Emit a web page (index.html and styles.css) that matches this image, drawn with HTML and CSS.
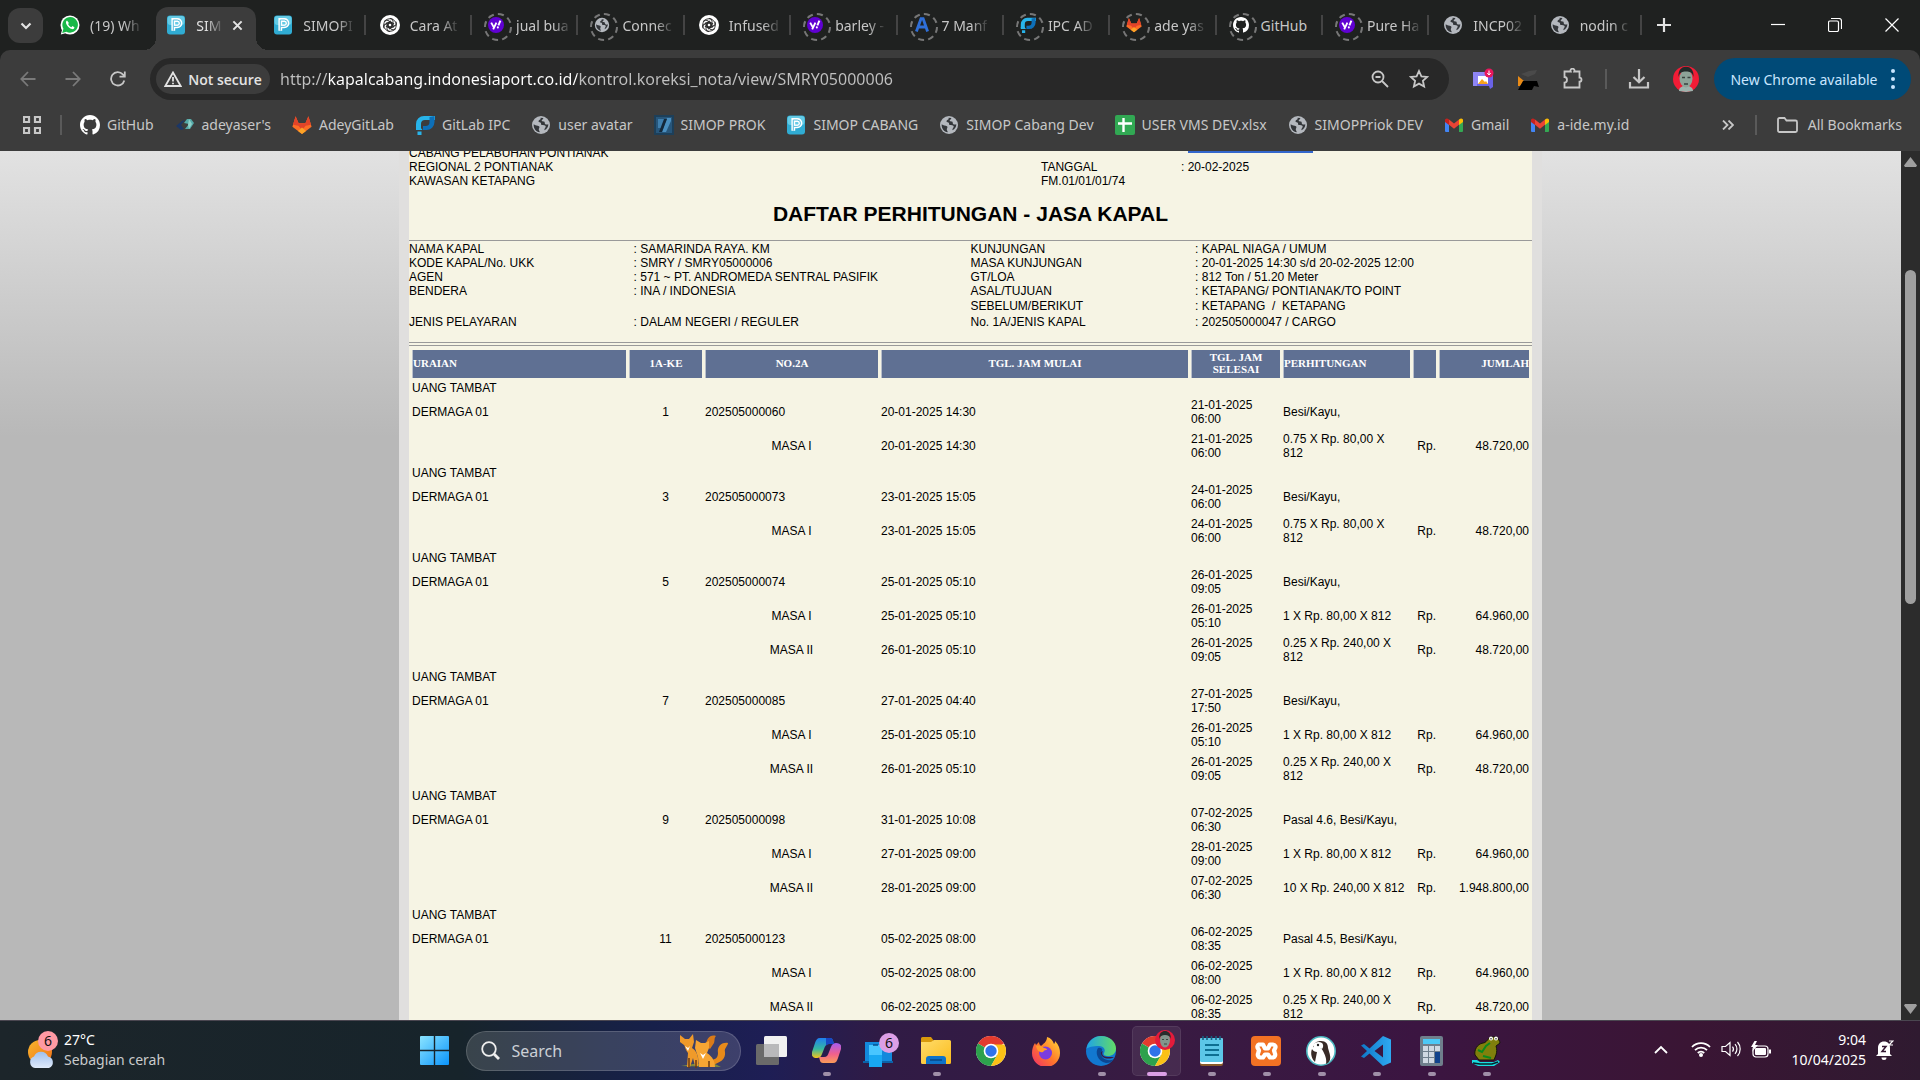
FILE: index.html
```
<!DOCTYPE html>
<html lang="id">
<head>
  <meta charset="utf-8">
  <title>SIMOP CABANG</title>
  <link rel="stylesheet" href="styles.css">
</head>
<body>
  <!-- icon sprite -->
  <svg class="sprite" aria-hidden="true">
    <defs>
      <linearGradient id="gSun" x1="0" y1="0" x2="1" y2="1"><stop offset="0" stop-color="#f8b62c"/><stop offset="1" stop-color="#f0701a"/></linearGradient>
      <linearGradient id="gCloud" x1="0" y1="0" x2="0" y2="1"><stop offset="0" stop-color="#9fc0ee"/><stop offset="1" stop-color="#dfeafb"/></linearGradient>
      <linearGradient id="gWin" x1="0" y1="0" x2="1" y2="1"><stop offset="0" stop-color="#8be4ff"/><stop offset="1" stop-color="#0a94fb"/></linearGradient>
      <linearGradient id="gCopA" x1="0" y1="0" x2="0" y2="1"><stop offset="0" stop-color="#1f7ff0"/><stop offset=".55" stop-color="#36b8a0"/><stop offset="1" stop-color="#f6c51b"/></linearGradient>
      <linearGradient id="gCopB" x1="0" y1="0" x2="0" y2="1"><stop offset="0" stop-color="#a55cf0"/><stop offset=".55" stop-color="#f0608c"/><stop offset="1" stop-color="#fb9c58"/></linearGradient>
      <linearGradient id="gFold" x1="0" y1="0" x2="1" y2="1"><stop offset="0" stop-color="#ffdc6b"/><stop offset="1" stop-color="#fbbc1c"/></linearGradient>
      <linearGradient id="gEdge" x1="0" y1="0" x2="1" y2="0"><stop offset="0" stop-color="#1fa4e6"/><stop offset="1" stop-color="#62dc66"/></linearGradient>
      <linearGradient id="gFox" x1="1" y1="0" x2="0" y2="1"><stop offset="0" stop-color="#ffe03a"/><stop offset=".5" stop-color="#ff7a2a"/><stop offset="1" stop-color="#f02a6c"/></linearGradient>
      <linearGradient id="gVs" x1="0" y1="0" x2="1" y2="0"><stop offset="0" stop-color="#0e78c8"/><stop offset="1" stop-color="#2fa9f2"/></linearGradient>
    </defs>
    <symbol id="i-whatsapp" viewBox="0 0 20 20"><circle cx="10" cy="10" r="9.500" fill="#fff"/><path d="M.8 19.400l1.400-5.200 4.300 3.800z" fill="#fff"/><path d="M2.200 17.900l1.200-4.100a7.800 7.800 0 1 1 3 2.900z" fill="#18b848"/><path d="M7 5.500c-1.400.8-1.300 2.500-.3 4.200 1.200 2.100 3.100 3.900 5.200 4.400 1.500.3 2.500-.6 2.500-1.900l-2-1.100-1 1.100c-1.500-.6-2.700-1.800-3.300-3.200l.8-1z" fill="#fff"/></symbol>
    <symbol id="i-simop" viewBox="0 0 20 20"><rect x="1" y=".5" width="18" height="19" rx="3" fill="#30acd3"/><rect x="1.500" y="1" width="17" height="9" rx="3" fill="#64cbe6"/><path d="M7.300 15.800V5h4a3.200 3.200 0 0 1 0 6.400H7.500" fill="none" stroke="#fff" stroke-width="3.800"/><path d="M7.300 15.500V5h4a3.200 3.200 0 0 1 0 6.400H7.500" fill="none" stroke="#58bfdf" stroke-width="1"/></symbol>
    <symbol id="i-gpt" viewBox="0 0 20 20"><circle cx="10" cy="10" r="10" fill="#fff"/><g fill="none" stroke="#222" stroke-width=".9"><path id="gptArm" d="M10 3.300a3 3 0 0 1 3 3v4.200l-3 1.700-3-1.700V7"/><use href="#gptArm" transform="rotate(60 10 10)"/><use href="#gptArm" transform="rotate(120 10 10)"/><use href="#gptArm" transform="rotate(180 10 10)"/><use href="#gptArm" transform="rotate(240 10 10)"/><use href="#gptArm" transform="rotate(300 10 10)"/><circle cx="10" cy="10" r="6.300"/></g></symbol>
    <symbol id="i-yahoo" viewBox="0 0 20 20"><circle cx="10" cy="10" r="10" fill="#6001d2"/><path d="M4 7l3.300 6M10.500 7L6.500 15.500" stroke="#fff" stroke-width="2.300" fill="none"/><path d="M15.500 4.500l-2.500 6" stroke="#fff" stroke-width="2.400"/><circle cx="12.300" cy="13" r="1.300" fill="#fff"/></symbol>
    <symbol id="i-globe" viewBox="0 0 20 20"><circle cx="10" cy="10" r="9" fill="#b4b8be"/><path d="M9.500 2.800c1 2-2.300 2.200-2 3.600.3 1 2 .6 2.400 1.500.4 1.200-.2 1.700 1 2.100 1.500.5 3-.2 3.700 1 .7 1.300-1.600 2.500-1.200 4.200 2.500-1.300 4-3.300 3.900-6-.9.500-2.400.7-3.200-.3-.7-.9 0-1.600-1-2.300-1-.6-2.200.1-2.400-.9-.2-1.100 1.900-1.200 1.600-2.600zM2.700 9.200c1.500 1.700 3.800.8 5.300 2 1.300 1.100-.4 2-.2 3.400.1 1 .8 1.300.9 2.700-3.600-.5-6.400-4-6-8.100z" fill="#33363a"/></symbol>
    <symbol id="i-a" viewBox="0 0 20 20"><path d="M3 18L8.800 2h2.600L17 18M5.500 12.500h9" fill="none" stroke="#2f6fd8" stroke-width="3.600"/></symbol>
    <symbol id="i-ipc" viewBox="0 0 20 20"><path d="M1 14V9a8 8 0 0 1 8-8h11v4H10a4 4 0 0 0-4 4v5z" fill="#28b4ea"/><path d="M19.500 1v6a8 8 0 0 1-8 8H8v-4h2.500a4 4 0 0 0 4-4V2z" fill="#0d6fb8"/><path d="M1 12.500h4.500l2 2.500H1zM2.500 16.500h4V20h-4z" fill="#28b4ea"/></symbol>
    <symbol id="i-gitlab" viewBox="0 0 20 20"><path d="M10 19L.4 11.800 3.600 1.200l3 7h6.800l3-7 3.200 10.600z" fill="#fc6d26"/><path d="M3.600 1.200l3 7h6.800l3-7 2.600 8.600-5.400 1L10 15l-3.600-4.200-5.400-1z" fill="#e24329"/><path d="M10 19l-4-3 4-3.400 4 3.400z" fill="#fca326"/></symbol>
    <symbol id="i-github" viewBox="0 0 16 16"><path fill="#fff" d="M8 0C3.580 0 0 3.580 0 8c0 3.540 2.290 6.530 5.470 7.590.4.070.55-.17.55-.38 0-.19-.01-.82-.01-1.490-2.010.37-2.530-.49-2.690-.94-.09-.23-.48-.94-.82-1.130-.28-.15-.68-.52-.01-.53.63-.01 1.080.58 1.230.82.72 1.210 1.870.87 2.330.66.070-.52.28-.87.510-1.070-1.780-.2-3.640-.89-3.640-3.950 0-.87.310-1.590.82-2.150-.08-.2-.36-1.020.08-2.120 0 0 .67-.21 2.200.82.640-.18 1.320-.27 2-.27s1.360.09 2 .27c1.530-1.040 2.200-.82 2.200-.82.440 1.100.160 1.920.08 2.120.510.560.82 1.270.82 2.150 0 3.070-1.870 3.750-3.650 3.950.290.250.540.730.540 1.480 0 1.070-.01 1.930-.01 2.200 0 .21.150.460.550.380A8.010 8.010 0 0 0 16 8c0-4.420-3.580-8-8-8z"/></symbol>
    <symbol id="i-ade" viewBox="0 0 20 20"><path d="M1 11l6-5 3-1-4 5 3 4-3 1z" fill="#1c3766"/><path d="M9 8l3-4h4l3 4-4 6h-5l4-5z" fill="#55a9a8"/><path d="M14 4l3 5-3 5-1-4z" fill="#8fd0c8"/></symbol>
    <symbol id="i-prok" viewBox="0 0 20 20"><rect width="20" height="20" fill="#1d3f59"/><rect x="2" y="2" width="16" height="16" fill="#27567b"/><path d="M4 4h7L8 13H4z" fill="#3f7fae"/><path d="M13 3h4v3l-5 11H8z" fill="#4a8fc0"/><path d="M10 4h3L8 17H5z" fill="#14283a"/></symbol>
    <symbol id="i-sheet" viewBox="0 0 20 20"><rect width="20" height="20" rx="2" fill="#31a853"/><path d="M8.500 3v14M3 8.500h14" stroke="#fff" stroke-width="2.400"/></symbol>
    <symbol id="i-gmail" viewBox="0 0 20 20"><path d="M1 5v11a1 1 0 0 0 1 1h3V8z" fill="#4285f4"/><path d="M19 5v11a1 1 0 0 1-1 1h-3V8z" fill="#34a853"/><path d="M15 4.500L10 8.500 5 4.500v5.300l5 4 5-4z" fill="#ea4335"/><path d="M1 5v2l4 3V4.500C3 2.500 1 3.500 1 5z" fill="#c5221f"/><path d="M19 5v2l-4 3V4.500c2-2 4-1 4 .5z" fill="#fbbc04"/></symbol>
    <symbol id="i-chrome" viewBox="0 0 30 30"><circle cx="15" cy="15" r="15" fill="#fff"/><path d="M15 15L2 7.500A15 15 0 0 1 28 7.500z" fill="#e33b2e"/><path d="M15 15L2 7.500A15 15 0 0 0 15 30l6.500-11.300z" fill="#2da14d"/><path d="M15 8.500h13.500A15 15 0 0 1 15 30l6.300-11.300z" fill="#fbc116"/><circle cx="15" cy="15" r="7.300" fill="#fff"/><circle cx="15" cy="15" r="5.700" fill="#2f73ea"/></symbol>
  </svg>

  <header class="browser">
    <div class="tab-strip">
      <button class="tab-search" aria-label="Search tabs"><svg width="12" height="8" viewBox="0 0 12 8"><path d="M1.500 1.500L6 6l4.500-4.500" class="line bold"/></svg></button>
      <nav class="tabs">
        <div class="tab no-sep"><svg class="fav"><use href="#i-whatsapp"/></svg><span class="tab-title">(19) Wh</span></div>
        <div class="tab active"><svg class="fav"><use href="#i-simop"/></svg><span class="tab-title">SIM</span><button class="tab-close" aria-label="Close tab"><svg width="11" height="11" viewBox="0 0 12 12"><path d="M1.500 1.500l9 9M10.500 1.500l-9 9" class="line bold"/></svg></button></div>
        <div class="tab"><svg class="fav"><use href="#i-simop"/></svg><span class="tab-title">SIMOPI</span></div>
        <div class="tab"><svg class="fav"><use href="#i-gpt"/></svg><span class="tab-title">Cara At</span></div>
        <div class="tab asleep"><svg class="fav"><use href="#i-yahoo"/></svg><span class="tab-title">jual bua</span></div>
        <div class="tab asleep"><svg class="fav"><use href="#i-globe"/></svg><span class="tab-title">Connec</span></div>
        <div class="tab"><svg class="fav"><use href="#i-gpt"/></svg><span class="tab-title">Infused</span></div>
        <div class="tab asleep"><svg class="fav"><use href="#i-yahoo"/></svg><span class="tab-title">barley -</span></div>
        <div class="tab asleep"><svg class="fav"><use href="#i-a"/></svg><span class="tab-title">7 Manf</span></div>
        <div class="tab asleep"><svg class="fav"><use href="#i-ipc"/></svg><span class="tab-title">IPC AD</span></div>
        <div class="tab asleep"><svg class="fav"><use href="#i-gitlab"/></svg><span class="tab-title">ade yas</span></div>
        <div class="tab asleep"><svg class="fav"><use href="#i-github"/></svg><span class="tab-title whole">GitHub</span></div>
        <div class="tab asleep"><svg class="fav"><use href="#i-yahoo"/></svg><span class="tab-title">Pure Ha</span></div>
        <div class="tab"><svg class="fav"><use href="#i-globe"/></svg><span class="tab-title">INCP02</span></div>
        <div class="tab"><svg class="fav"><use href="#i-globe"/></svg><span class="tab-title">nodin c</span></div>
      </nav>
      <div class="window-side">
        <button class="new-tab" aria-label="New tab"><svg width="14" height="14" viewBox="0 0 14 14"><path d="M7 0v14M0 7h14" class="line bold"/></svg></button>
        <div class="window-controls">
          <button aria-label="Minimize"><svg width="14" height="14" viewBox="0 0 14 14"><path d="M0 6.500h14" class="line white"/></svg></button>
          <button aria-label="Restore"><svg width="14" height="14" viewBox="0 0 14 14"><rect x=".5" y="3" width="10" height="10.500" rx="1.500" class="line white"/><path d="M3 .5h8a2.500 2.500 0 0 1 2.500 2.500v8" class="line white"/></svg></button>
          <button aria-label="Close"><svg width="14" height="14" viewBox="0 0 14 14"><path d="M.5.5l13 13M13.500.5l-13 13" class="line white"/></svg></button>
        </div>
      </div>
    </div>

    <div class="toolbar">
      <div class="nav-buttons">
        <button class="dim" aria-label="Back"><svg width="16" height="16" viewBox="0 0 16 16"><path d="M15.500 8H1.500M8 1L1.300 8 8 15" class="line mid"/></svg></button>
        <button class="dim" aria-label="Forward"><svg width="16" height="16" viewBox="0 0 16 16"><path d="M.5 8h14M8 1l6.700 7L8 15" class="line mid"/></svg></button>
        <button aria-label="Reload"><svg width="16" height="16" viewBox="0 0 16 16"><path d="M14.300 9.500A6.700 6.700 0 1 1 12.800 3.300L14.500 5M14.800.5v5.200H9.500" class="line mid"/></svg></button>
      </div>
      <div class="omnibox">
        <button class="chip"><svg width="18" height="16" viewBox="0 0 18 16"><path d="M9 1.500L1.300 15h15.400zM9 6v4.500M9 11.700v1.600" class="line mid"/></svg>Not secure</button>
        <input class="url" type="text" aria-label="Address" value="http://kapalcabang.indonesiaport.co.id/kontrol.koreksi_nota/view/SMRY05000006">
        <button aria-label="Zoom"><svg width="18" height="18" viewBox="0 0 18 18"><circle cx="7" cy="7" r="5.500" class="line mid"/><path d="M11 11l6 6M4.500 7h5" class="line mid"/></svg></button>
        <button aria-label="Bookmark"><svg width="20" height="20" viewBox="0 0 20 20"><path d="M10 2l2.400 5.300 5.800.6-4.300 3.900 1.200 5.700-5.100-2.900-5.100 2.900 1.200-5.700L1.800 7.900l5.800-.6z" class="line mid"/></svg></button>
      </div>
      <div class="extensions">
        <svg width="22" height="22" viewBox="0 0 22 22"><rect x="1" y="4" width="15" height="14" fill="#8f86f5"/><path d="M16 7h5v12l-3 2-1-3H5v-2h11z" fill="#6a62e6"/><rect x="6" y="8" width="10" height="8" fill="#fff"/><path d="M6 16l4-5 3 3 1-1 2 3z" fill="#f7a21c"/><circle cx="17" cy="5" r="4.500" fill="#e8175d"/><path d="M17 2.500v4M15.300 5l1.700 2 1.700-2" stroke="#fff" fill="none"/></svg>
        <svg width="22" height="22" viewBox="0 0 22 22"><path d="M4 6l8-3 8-1-2 4-7 3z" fill="#4a4a4a"/><path d="M1 8l6 5-4 5H1z" fill="#e98a15"/><path d="M6 13h14l2 6-5-1-2 4H1z" fill="#000"/></svg>
        <svg width="22" height="22" viewBox="0 0 22 22"><path d="M2.500 3.500h6.200a2 2 0 1 1 3.600 0h5.200v6.200a2 2 0 1 1 0 4v5.800H2.500v-4.800c3.300 0 3.300-5.700 0-5.700z" class="line mid"/></svg>
        <span class="bar-sep"></span>
        <svg width="22" height="22" viewBox="0 0 22 22"><path d="M11 1v13M5.500 9L11 14.300 16.500 9M2 14v5.500h18V14" class="line bold"/></svg>
        <svg class="avatar" width="26" height="26" viewBox="0 0 26 26"><circle cx="13" cy="13" r="13" fill="#f21c36"/><path d="M6 25c0-4 3-4 4-5h6c1 1 4 1 4 5l-7 1z" fill="#9fb3ad"/><ellipse cx="13" cy="12.500" rx="6.500" ry="9" fill="#8da398"/><path d="M5.500 11C5 4 8.500.8 13 .8S21 4 20.500 11C19 6 17 5.500 13 5.500S7 6 5.500 11z" fill="#232b2a"/><path d="M9 11.500h3M14.500 11.500h3M11 18h4" stroke="#39433f" stroke-width="1.300"/></svg>
      </div>
      <button class="update">New Chrome available<svg width="4" height="20" viewBox="0 0 4 20"><g fill="#c9e6ff"><circle cx="2" cy="2" r="2"/><circle cx="2" cy="10" r="2"/><circle cx="2" cy="18" r="2"/></g></svg></button>
    </div>

    <div class="bookmarks">
      <button class="apps" aria-label="Apps"><svg width="18" height="18" viewBox="0 0 18 18"><path d="M1 1h5v5H1zM12 1h5v5h-5zM1 12h5v5H1zM12 12h5v5h-5z" class="line bold"/></svg></button>
      <span class="bar-sep"></span>
      <nav class="bookmark-list">
        <a href="#"><svg><use href="#i-github"/></svg>GitHub</a>
        <a href="#"><svg><use href="#i-ade"/></svg>adeyaser's</a>
        <a href="#"><svg><use href="#i-gitlab"/></svg>AdeyGitLab</a>
        <a href="#"><svg><use href="#i-ipc"/></svg>GitLab IPC</a>
        <a href="#"><svg><use href="#i-globe"/></svg>user avatar</a>
        <a href="#"><svg><use href="#i-prok"/></svg>SIMOP PROK</a>
        <a href="#"><svg><use href="#i-simop"/></svg>SIMOP CABANG</a>
        <a href="#"><svg><use href="#i-globe"/></svg>SIMOP Cabang Dev</a>
        <a href="#"><svg><use href="#i-sheet"/></svg>USER VMS DEV.xlsx</a>
        <a href="#"><svg><use href="#i-globe"/></svg>SIMOPPriok DEV</a>
        <a href="#"><svg><use href="#i-gmail"/></svg>Gmail</a>
        <a href="#"><svg><use href="#i-gmail"/></svg>a-ide.my.id</a>
      </nav>
      <button class="more" aria-label="More bookmarks"><svg width="12" height="10" viewBox="0 0 12 10"><path d="M1 .5L5.500 5 1 9.500M6.500.5L11 5l-4.500 4.500" class="line mid"/></svg></button>
      <span class="bar-sep"></span>
      <button class="all-bookmarks"><svg width="21" height="16" viewBox="0 0 21 16"><path d="M1 13.500v-11A1.500 1.500 0 0 1 2.500 1h5l2 2.500h9A1.500 1.500 0 0 1 20 5v8.500a1.500 1.500 0 0 1-1.500 1.500h-16A1.500 1.500 0 0 1 1 13.500z" class="line mid"/></svg>All Bookmarks</button>
    </div>
  </header>

  <div class="viewport">
    <main class="page">
      <div class="sheet">
        <table class="office">
          <tr><td class="office-name">CABANG PELABUHAN PONTIANAK</td><td class="office-label"></td><td><span class="marked"></span></td></tr>
          <tr><td>REGIONAL 2 PONTIANAK</td><td>TANGGAL</td><td>: 20-02-2025</td></tr>
          <tr><td>KAWASAN KETAPANG</td><td>FM.01/01/01/74</td><td></td></tr>
        </table>
        <h1>DAFTAR PERHITUNGAN - JASA KAPAL</h1>
        <table class="ship">
          <tr><td>NAMA KAPAL</td><td>: SAMARINDA RAYA. KM</td><td>KUNJUNGAN</td><td>: KAPAL NIAGA / UMUM</td></tr>
          <tr><td>KODE KAPAL/No. UKK</td><td>: SMRY / SMRY05000006</td><td>MASA KUNJUNGAN</td><td>: 20-01-2025 14:30 s/d 20-02-2025 12:00</td></tr>
          <tr><td>AGEN</td><td>: 571 ~ PT. ANDROMEDA SENTRAL PASIFIK</td><td>GT/LOA</td><td>: 812 Ton / 51.20 Meter</td></tr>
          <tr><td>BENDERA</td><td>: INA / INDONESIA</td><td>ASAL/TUJUAN</td><td>: KETAPANG/ PONTIANAK/TO POINT</td></tr>
          <tr class="tall"><td></td><td></td><td>SEBELUM/BERIKUT</td><td>: KETAPANG&nbsp; /&nbsp; KETAPANG</td></tr>
          <tr class="tall"><td>JENIS PELAYARAN</td><td>: DALAM NEGERI / REGULER</td><td>No. 1A/JENIS KAPAL</td><td>: 202505000047 / CARGO</td></tr>
        </table>
        <table class="detail">
          <colgroup><col class="c-uraian"><col class="c-ke"><col class="c-no"><col><col class="c-selesai"><col class="c-hitung"><col class="c-rp"><col class="c-jumlah"></colgroup>
          <thead>
            <tr><th class="left">URAIAN</th><th>1A-KE</th><th>NO.2A</th><th>TGL. JAM MULAI</th><th>TGL. JAM<br>SELESAI</th><th class="left">PERHITUNGAN</th><th></th><th class="right">JUMLAH</th></tr>
          </thead>
          <tbody>
            <tr class="group"><td colspan="8">UANG TAMBAT</td></tr>
            <tr><td>DERMAGA 01</td><td class="mid">1</td><td>202505000060</td><td>20-01-2025 14:30</td><td>21-01-2025 06:00</td><td>Besi/Kayu,</td><td></td><td></td></tr>
            <tr><td></td><td></td><td class="mid">MASA I</td><td>20-01-2025 14:30</td><td>21-01-2025 06:00</td><td>0.75 X Rp. 80,00 X<br>812</td><td class="right">Rp.</td><td class="right">48.720,00</td></tr>

            <tr class="group"><td colspan="8">UANG TAMBAT</td></tr>
            <tr><td>DERMAGA 01</td><td class="mid">3</td><td>202505000073</td><td>23-01-2025 15:05</td><td>24-01-2025 06:00</td><td>Besi/Kayu,</td><td></td><td></td></tr>
            <tr><td></td><td></td><td class="mid">MASA I</td><td>23-01-2025 15:05</td><td>24-01-2025 06:00</td><td>0.75 X Rp. 80,00 X<br>812</td><td class="right">Rp.</td><td class="right">48.720,00</td></tr>

            <tr class="group"><td colspan="8">UANG TAMBAT</td></tr>
            <tr><td>DERMAGA 01</td><td class="mid">5</td><td>202505000074</td><td>25-01-2025 05:10</td><td>26-01-2025 09:05</td><td>Besi/Kayu,</td><td></td><td></td></tr>
            <tr><td></td><td></td><td class="mid">MASA I</td><td>25-01-2025 05:10</td><td>26-01-2025 05:10</td><td>1 X Rp. 80,00 X 812</td><td class="right">Rp.</td><td class="right">64.960,00</td></tr>
            <tr><td></td><td></td><td class="mid">MASA II</td><td>26-01-2025 05:10</td><td>26-01-2025 09:05</td><td>0.25 X Rp. 240,00 X<br>812</td><td class="right">Rp.</td><td class="right">48.720,00</td></tr>

            <tr class="group"><td colspan="8">UANG TAMBAT</td></tr>
            <tr><td>DERMAGA 01</td><td class="mid">7</td><td>202505000085</td><td>27-01-2025 04:40</td><td>27-01-2025 17:50</td><td>Besi/Kayu,</td><td></td><td></td></tr>
            <tr><td></td><td></td><td class="mid">MASA I</td><td>25-01-2025 05:10</td><td>26-01-2025 05:10</td><td>1 X Rp. 80,00 X 812</td><td class="right">Rp.</td><td class="right">64.960,00</td></tr>
            <tr><td></td><td></td><td class="mid">MASA II</td><td>26-01-2025 05:10</td><td>26-01-2025 09:05</td><td>0.25 X Rp. 240,00 X<br>812</td><td class="right">Rp.</td><td class="right">48.720,00</td></tr>

            <tr class="group"><td colspan="8">UANG TAMBAT</td></tr>
            <tr><td>DERMAGA 01</td><td class="mid">9</td><td>202505000098</td><td>31-01-2025 10:08</td><td>07-02-2025 06:30</td><td>Pasal 4.6, Besi/Kayu,</td><td></td><td></td></tr>
            <tr><td></td><td></td><td class="mid">MASA I</td><td>27-01-2025 09:00</td><td>28-01-2025 09:00</td><td>1 X Rp. 80,00 X 812</td><td class="right">Rp.</td><td class="right">64.960,00</td></tr>
            <tr><td></td><td></td><td class="mid">MASA II</td><td>28-01-2025 09:00</td><td>07-02-2025 06:30</td><td>10 X Rp. 240,00 X 812</td><td class="right">Rp.</td><td class="right">1.948.800,00</td></tr>

            <tr class="group"><td colspan="8">UANG TAMBAT</td></tr>
            <tr><td>DERMAGA 01</td><td class="mid">11</td><td>202505000123</td><td>05-02-2025 08:00</td><td>06-02-2025 08:35</td><td>Pasal 4.5, Besi/Kayu,</td><td></td><td></td></tr>
            <tr><td></td><td></td><td class="mid">MASA I</td><td>05-02-2025 08:00</td><td>06-02-2025 08:00</td><td>1 X Rp. 80,00 X 812</td><td class="right">Rp.</td><td class="right">64.960,00</td></tr>
            <tr><td></td><td></td><td class="mid">MASA II</td><td>06-02-2025 08:00</td><td>06-02-2025 08:35</td><td>0.25 X Rp. 240,00 X<br>812</td><td class="right">Rp.</td><td class="right">48.720,00</td></tr>
          </tbody>
        </table>
      </div>
    </main>
    <div class="scrollbar">
      <svg width="13" height="10" viewBox="0 0 13 10"><path d="M6.500 0L13 8.500 12 10H1L0 8.500z" fill="#9f9f9f"/></svg>
      <div class="track"><div class="thumb"></div></div>
      <svg width="13" height="10" viewBox="0 0 13 10"><path d="M6.500 10L13 1.500 12 0H1L0 1.500z" fill="#9f9f9f"/></svg>
    </div>
  </div>

  <footer class="taskbar">
    <div class="weather">
      <svg width="32" height="38" viewBox="0 0 32 38"><circle cx="13" cy="21" r="12" fill="url(#gSun)"/><path d="M8 37a6 6 0 0 1-1-11.500 7.500 7.500 0 0 1 14 0A6 6 0 0 1 22 37z" fill="url(#gCloud)"/><circle cx="21" cy="10" r="10" fill="#ff9aa4"/><text x="21" y="15" text-anchor="middle" class="badge-text">6</text></svg>
      <div class="weather-text"><span class="temp">27°C</span><span>Sebagian cerah</span></div>
    </div>

    <div class="task-center">
      <button class="task" aria-label="Start"><svg width="29" height="29" viewBox="0 0 29 29"><path d="M0 1a1 1 0 0 1 1-1h12.800v13.800H0zM15.200 0H28a1 1 0 0 1 1 1v12.800H15.200zM0 15.200h13.800V29H1a1 1 0 0 1-1-1zM15.200 15.200H29V28a1 1 0 0 1-1 1H15.200z" fill="url(#gWin)"/></svg></button>
      <div class="search">
        <svg width="19" height="19" viewBox="0 0 19 19"><circle cx="8" cy="8" r="6.800" class="line mid"/><path d="M13 13l5 5" class="line thick"/></svg>
        <input type="text" placeholder="Search" aria-label="Search">
        <svg width="50" height="34" viewBox="0 0 50 34"><path d="M2 32l12-2h22l6 3z" fill="#7e8a3c"/><path d="M33 31c8-2 14-6 13-13-1-4 3-6 3-9-7-1-11 4-10 10 0 5-3 7-8 7z" fill="#e88b1a"/><path d="M27 12C27 5 31 0 37 2c-2 2-1 4-2 7l-4 6z" fill="#d97a18"/><path d="M1 1l5 4h4l4-5 1 8-2 6c5 3 7 9 6 18h-3l-2-8-3 9H8l1-14c-3-4-3-7-4-8L1 8z" fill="#ef9a2a"/><path d="M17 6l5 3h4l4-2v7l-2 5c6 4 8 9 8 14H20l-1-10-3-9z" fill="#f6a533"/><path d="M6 12l3 2 2-2-2 5zM21 19l3 2 3-2-3 6z" fill="#fff"/><path d="M10 24v10M17 26v8M30 27v6" stroke="#6b3a10" stroke-width="1.500"/></svg>
      </div>
      <button class="task" aria-label="Task view"><svg width="31" height="29" viewBox="0 0 31 29"><rect x="0" y="8" width="23" height="21" rx="1.500" fill="#6a6a6a"/><rect x="8" y="0" width="23" height="21" rx="1.500" fill="#f1f1f1"/><path d="M8 8h15v13H8z" fill="#b9b9bb"/></svg></button>
      <button class="task open" aria-label="Copilot"><svg width="29" height="27" viewBox="0 0 29 27"><path d="M8 1h10c3 0 3 3 4 6h-5c-3 0-4 2-5 5l-2 5c-1 3-3 4-5 4-4 0-6-2-5-6l3-9C4 3 5 1 8 1z" fill="url(#gCopA)"/><path d="M21 26H11c-3 0-3-3-4-6h5c3 0 4-2 5-5l2-5c1-3 3-4 5-4 4 0 6 2 5 6l-3 9c-1 3-2 5-5 5z" fill="url(#gCopB)"/><path d="M14 1h4c3 0 3 3 4 6h-5c-1 0-2 .5-3 1.500z" fill="#1746c4"/></svg></button>
      <button class="task" aria-label="Phone Link"><svg width="36" height="36" viewBox="0 0 36 36"><path d="M2 9h27v20H2z" fill="#1289dc"/><path d="M0 28h30v2H0z" fill="#0b62a8"/><path d="M6 12h13v22H6z" fill="#18a8f2"/><path d="M6 12h13v10H6z" fill="#48c6ff"/><path d="M10 12h5" stroke="#064f8c" stroke-width="1.500"/><circle cx="26" cy="10" r="10" fill="#dc9fe6"/><text x="26" y="15" text-anchor="middle" class="badge-text">6</text></svg></button>
      <button class="task open" aria-label="File Explorer"><svg width="30" height="27" viewBox="0 0 30 27"><path d="M0 1.500A1.500 1.500 0 0 1 1.500 0H10l3 4H28a2 2 0 0 1 2 2v6H0z" fill="#d99a0c"/><path d="M0 5h10l3-2h15.500A1.500 1.500 0 0 1 30 4.500v21a1.500 1.500 0 0 1-1.500 1.500h-27A1.500 1.500 0 0 1 0 25.500z" fill="url(#gFold)"/><path d="M5 27v-5a3 3 0 0 1 3-3h14a3 3 0 0 1 3 3v5z" fill="#0f73c9"/><path d="M9 23h12" stroke="#06427c" stroke-width="1.300"/></svg></button>
      <button class="task" aria-label="Chrome"><svg width="30" height="30"><use href="#i-chrome"/></svg></button>
      <button class="task" aria-label="Firefox"><svg width="30" height="30" viewBox="0 0 30 30"><path d="M16 1c4 1 6 4 7 7 1-1 1-2 1-3 4 4 5 8 5 12a14 14 0 0 1-28 0c0-4 1-7 3-10l1 2 3-3c0 2 1 3 2 4 2-2 6-4 6-9z" fill="url(#gFox)"/><circle cx="14.500" cy="17" r="6.500" fill="#7a3ce0"/><path d="M5 10c3-1 6 0 8 2 2 0 3 1 3 2-3 0-3 1-4 2-3 1-6-1-7-6z" fill="#ff9a2c"/></svg></button>
      <button class="task open" aria-label="Edge"><svg width="30" height="30" viewBox="0 0 30 30"><circle cx="15" cy="15" r="15" fill="#1278d0"/><path d="M.5 13A15 15 0 0 1 15 0c9 0 15 6 15 12.500 0 5-4 7.500-8 7.500-3 0-5-1-4-3 2-3 0-7-5-7C7 10 2 11 .5 13z" fill="url(#gEdge)"/><path d="M12 12c-3 4-1 13 8 15 4 0 6-1 7.500-3.500C21 26 13 22 16 15c1-2-1-4-4-3z" fill="#0c4691"/><path d="M17 15c-2 3 0 6 5 6l6 0c-4 3-14 2-13-5z" fill="#381942"/></svg></button>
      <button class="task open current" aria-label="Chrome, Profile 1"><svg width="38" height="36" viewBox="0 0 38 36"><use href="#i-chrome" x="3" y="6" width="30" height="30"/><circle cx="28" cy="10" r="10" fill="#e31b3b"/><ellipse cx="28" cy="10" rx="5" ry="7.500" fill="#82968c"/><path d="M22 9c0-6 3-8 6-8s6 2 6 8c-1-3-3-4-6-4s-5 1-6 4z" fill="#272d2c"/><path d="M25 9.500h2M29 9.500h2M27 14h3" stroke="#3c4642"/></svg></button>
      <button class="task open" aria-label="Notepad"><svg width="23" height="30" viewBox="0 0 23 30"><rect y="2" width="23" height="28" rx="2" fill="#8a5a2a"/><rect y="2" width="23" height="26" rx="2" fill="#fff"/><rect y="2" width="23" height="24" rx="1.500" fill="#5cc7e8"/><path d="M3 0v4M7 0v4M11.500 0v4M16 0v4M20 0v4" stroke="#17607f" stroke-width="1.600"/><path d="M5 9h14M5 14h14M5 19h14" stroke="#0d6f92" stroke-width="2"/></svg></button>
      <button class="task open" aria-label="XAMPP"><svg width="30" height="30" viewBox="0 0 30 30"><rect width="30" height="30" rx="4" fill="#f27224"/><path d="M8 8.500h4l2 4h3l2-4h3a2.500 2.500 0 0 1 2 4l-1 2 1 3a3 3 0 0 1-2 4h-3l-2-3h-3l-2 3H9a3 3 0 0 1-2-4l1-3-1-2a2.500 2.500 0 0 1 1-4z" fill="none" stroke="#fff" stroke-width="4.200" stroke-linejoin="round"/></svg></button>
      <button class="task open" aria-label="DBeaver"><svg width="30" height="30" viewBox="0 0 30 30"><circle cx="15" cy="15" r="14.200" fill="#fff" stroke="#4bb7c0" stroke-width="1.600"/><path d="M7 11c1-4 4-6 8-6 5 0 7 3 7 7 1 4 3 8 2 12-1 2-2 3-4 4 1-5-1-9-3-13-1-2-2-3-3-3" fill="#382a26"/><path d="M7 9c2-3 6-4 9-2 2 2 1 5 0 6-2-1-3-1-4 1-2 1-4-1-5-5z" fill="#fff"/><path d="M6 13c1 2 3 3 5 3l-2 10c-3-3-5-8-3-13z" fill="#382a26"/><circle cx="12" cy="9" r="1.200" fill="#222"/></svg></button>
      <button class="task open" aria-label="Visual Studio Code"><svg width="30" height="30" viewBox="0 0 30 30"><path d="M22 0l8 3.500v23L22 30 8.500 17.500 3 22l-3-1.500L6 15 0 9.500 3 8l5.500 4.500zM22 8.500L13.500 15 22 21.500z" fill="url(#gVs)" fill-rule="evenodd"/></svg></button>
      <button class="task open" aria-label="Calculator"><svg width="23" height="30" viewBox="0 0 23 30"><rect width="23" height="30" rx="2" fill="#6f7f8c"/><rect x="3" y="3" width="17" height="5" fill="#4cc9f6"/><path d="M3 10h5v5H3zM9 10h5v5H9zM15 10h5v5h-5zM3 16h5v5H3zM9 16h5v5H9zM3 22h5v5H3zM9 22h5v5H9z" fill="#cfd9e2"/><path d="M15 16h5v11h-5z" fill="#10438c"/></svg></button>
      <button class="task open" aria-label="Frog"><svg width="30" height="30" viewBox="0 0 30 30"><path d="M1 24h5l3 2h14l4-2 2 2-6 4H7l-6-3z" fill="#19dde0"/><path d="M2 27l7 1h12l6-2" stroke="#07222a" stroke-width="1.500" fill="none"/><path d="M4 19c-1-5 2-11 8-12 3 0 5-4 7-6h7c1 2 3 4 3 6l-4 3c1 3 1 6 0 9l-2 5H8z" fill="#80800c" stroke="#15150a"/><path d="M7 14l4 2 4-6 4-3M12 20l8 2" stroke="#0a8a1c" stroke-width="2" fill="none"/><circle cx="20" cy="2.500" r="2" fill="#fff"/><circle cx="25" cy="2.500" r="2" fill="#fff"/><path d="M20 2v1.500M25 2v1.500" stroke="#000"/></svg></button>
    </div>

    <div class="tray">
      <svg width="14" height="9" viewBox="0 0 14 9"><path d="M1 8l6-6 6 6" class="line white mid"/></svg>
      <div class="tray-icons">
        <svg width="20" height="16" viewBox="0 0 20 16"><path d="M1 6a12.500 12.500 0 0 1 18 0M4 9.200a8.500 8.500 0 0 1 12 0M6.800 12a4.500 4.500 0 0 1 6.400 0" class="line white mid"/><circle cx="10" cy="14" r="2" fill="#fff"/></svg>
        <svg width="20" height="16" viewBox="0 0 20 16"><path d="M1 5.500h3.500L9 1.500v13l-4.500-4H1z" class="line white"/><path d="M11.500 5.500a4 4 0 0 1 0 5M14 3.200a7 7 0 0 1 0 9.600M16.500 1a10.500 10.500 0 0 1 0 14" class="line white"/></svg>
        <svg width="20" height="17" viewBox="0 0 20 17"><rect x="2" y="5" width="15" height="11" rx="3" class="line white"/><rect x="4" y="7" width="11" height="7" rx="1" fill="#fff"/><path d="M18 8.500h2v4h-2z" fill="#fff"/><path d="M3.500 0L0 6h3L1 11l6-7H4L6 0z" fill="#fff"/></svg>
      </div>
      <div class="clock"><span>9:04</span><span>10/04/2025</span></div>
      <svg width="18" height="20" viewBox="0 0 18 20"><path d="M0 16l2-2V8c0-4 2.500-6.500 6-6.500 4 0 6 2.500 6 6.500v6l2 2zM5.500 17.500h5a2.500 2.500 0 0 1-5 0z" fill="#fff"/><path d="M6 6.500h4l-4 5h4" stroke="#321630" stroke-width="1.500" fill="none"/><path d="M13 1h4l-4 4h4" class="line white"/></svg>
    </div>
  </footer>
</body>
</html>
```

FILE: styles.css
```
:root {
  --strip: #1f2120;
  --bar: #3c3c3c;
  --field: #282828;
  --text: #c7c7c7;
  --sheet: #f6f4e4;
  --head: #5f7093;
}

* { box-sizing: border-box; }

body {
  margin: 0;
  height: 100vh;
  display: flex;
  flex-direction: column;
  overflow: hidden;
  font-family: "Noto Sans", "Open Sans", sans-serif;
  font-size: 14px;
  color: var(--text);
}

button {
  border: 0;
  padding: 0;
  background: none;
  font: inherit;
  color: inherit;
  display: flex;
  align-items: center;
  justify-content: center;
}

svg { display: block; flex-shrink: 0; }
.sprite { position: absolute; width: 0; height: 0; }

.line { fill: none; stroke: currentColor; stroke-width: 1.2; }
.line.mid { stroke-width: 1.8; }
.line.bold { stroke-width: 2.2; }
.line.thick { stroke-width: 2.8; }
.line.white { stroke: #fff; }

/* tab strip */
.browser { background: var(--strip); }

.tab-strip {
  display: flex;
  height: 50px;
  padding-left: 8px;
}

.tab-search {
  width: 35px;
  height: 35px;
  margin: 8px 5px 0 0;
  border-radius: 12px;
  background: var(--bar);
  color: #e3e3e3;
}

.tabs { flex: 1; display: flex; min-width: 0; }

.tab {
  position: relative;
  flex: 1 1 0;
  min-width: 0;
  display: flex;
  align-items: center;
  gap: 10px;
  padding: 0 0 0 14px;
}

.tab:first-child { padding-left: 12px; }

.fav { width: 20px; height: 20px; }

.tab-title {
  white-space: nowrap;
  mask-image: linear-gradient(to left, rgba(0, 0, 0, .15), #000 16px);
}

.tab-title.whole { mask-image: none; }

.tab::after {
  content: "";
  position: absolute;
  right: 0;
  top: 15px;
  width: 2px;
  height: 20px;
  background: #444;
}

.tab.no-sep::after { display: none; }

.tab.asleep::before {
  content: "";
  position: absolute;
  left: 12px;
  top: 13px;
  width: 24px;
  height: 24px;
  border: 2px dashed #777;
  border-radius: 50%;
}

.tab.asleep .fav { padding: 2px; }

.tab.active {
  flex: 0 0 100px;
  margin: 7px 3px 0 4px;
  padding: 0 14px 7px 10px;
  justify-content: space-between;
  border-radius: 12px 12px 0 0;
  background: var(--bar);
  color: #e3e3e3;
}

.tab.active::before,
.tab.active::after {
  content: "";
  position: absolute;
  top: auto;
  bottom: 0;
  width: 12px;
  height: 12px;
}

.tab.active::before {
  left: -12px;
  background: radial-gradient(circle at 0 0, transparent 12px, var(--bar) 12px);
}

.tab.active::after {
  right: -12px;
  background: radial-gradient(circle at 100% 0, transparent 12px, var(--bar) 12px);
}

.window-side {
  width: 278px;
  display: flex;
  justify-content: space-between;
  color: #e3e3e3;
}

.new-tab { width: 44px; }
.window-controls { display: flex; }
.window-controls button { width: 57px; }

/* toolbar */
.toolbar {
  display: flex;
  align-items: center;
  height: 58px;
  padding: 0 9px 0 0;
  border-radius: 10px 10px 0 0;
  background: var(--bar);
}

.nav-buttons {
  display: flex;
  width: 150px;
  padding-left: 5px;
}

.nav-buttons button { width: 45px; height: 42px; }
.nav-buttons .dim { color: #7a7a7a; }

.omnibox {
  flex: 1;
  display: flex;
  align-items: center;
  height: 42px;
  padding: 0 20px 0 6px;
  gap: 20px;
  border-radius: 21px;
  background: var(--field);
}

.chip {
  gap: 6px;
  height: 30px;
  width: 114px;
  margin-right: -10px;
  border-radius: 15px;
  background: var(--bar);
  color: #e3e3e3;
  font-family: "Open Sans", "Noto Sans", sans-serif;
  font-weight: 600;
}

.url {
  flex: 1;
  min-width: 0;
  padding: 0;
  border: 0;
  outline: 0;
  font: 16px/24px "Noto Sans", "Open Sans", sans-serif;
  color: transparent;
  background: linear-gradient(to right, #c0c0c0 49px, #fff 49px, #fff 297px, #c0c0c0 297px);
  background-clip: text;
  -webkit-background-clip: text;
}

.extensions {
  display: flex;
  align-items: center;
  gap: 23px;
  padding: 0 15px 0 23px;
}

.bar-sep { width: 2px; height: 20px; background: #5a5a5a; }
.extensions .bar-sep { margin: 0 -2px; }

.update {
  gap: 13px;
  width: 197px;
  height: 42px;
  border-radius: 21px;
  background: #004a77;
  color: #c9e6ff;
}

/* bookmarks */
.bookmarks {
  display: flex;
  align-items: center;
  height: 43px;
  padding: 0 18px 10px 23px;
  background: var(--bar);
}

.apps { margin-right: 19px; }

.bookmark-list {
  flex: 1;
  display: flex;
  gap: 21px;
  padding-left: 18px;
}

.bookmark-list a {
  display: flex;
  align-items: center;
  gap: 7px;
  color: inherit;
  text-decoration: none;
  white-space: nowrap;
}

.bookmark-list svg { width: 20px; height: 20px; }
.more { margin-right: 21px; }
.all-bookmarks { gap: 10px; margin-left: 20px; }

/* page */
.viewport { flex: 1; display: flex; min-height: 0; }

.page {
  flex: 1;
  overflow: hidden;
  padding-left: 40px;
  background: linear-gradient(#e2e2e2, #b8b8b8 286px);
  color: #000;
  font: 12px/14px "Liberation Sans", Arial, sans-serif;
}

.sheet {
  max-width: 1143px;
  margin: -5px auto 0;
  padding-bottom: 40px;
  border: solid #e0dfde;
  border-width: 0 10px;
  background: var(--sheet);
}

.sheet table {
  width: 100%;
  table-layout: fixed;
  border-collapse: collapse;
}

.sheet td, .sheet th { padding: 0; }

.office tr { height: 14px; }
.office-name { width: 632px; }
.office-label { width: 140px; }

.marked {
  display: block;
  width: 125px;
  height: 7px;
  margin: 0 0 7px 7px;
  background: #3366cc;
}

h1 {
  margin: 0;
  padding: 14px 0;
  font-size: 21px;
  line-height: 24px;
  text-align: center;
}

.ship { border-top: 1px solid #999; }
.ship td:nth-child(odd) { width: 20%; }
.ship td:nth-child(even) { width: 30%; }
.ship tr:first-child td { padding-top: 1px; }
.ship .tall td { height: 16px; }

.sheet .detail {
  margin-top: 12px;
  padding-top: 1px;
  border-top: 4px double #999;
  border-collapse: separate;
  border-spacing: 3px;
}

.c-uraian { width: 214px; }
.c-ke { width: 73px; }
.c-no { width: 173px; }
.c-selesai { width: 89px; }
.c-hitung { width: 127px; }
.c-rp { width: 23px; }
.c-jumlah { width: 90px; }

.detail th {
  height: 28px;
  padding-bottom: 3px;
  border-left: 1px solid #b9bfca;
  background: var(--head);
  color: #fff;
  font: bold 11px/12px "Liberation Serif", "Times New Roman", serif;
}

.detail td { padding-bottom: 3px; }
.detail .group td { padding-bottom: 0; }
.detail .mid { text-align: center; }
.detail .left { text-align: left; }
.detail .right { text-align: right; }

/* scrollbar */
.scrollbar {
  width: 19px;
  padding: 6px 0;
  display: flex;
  flex-direction: column;
  align-items: center;
  background: #2c2c2c;
}

.track { flex: 1; padding-top: 103px; }

.thumb {
  width: 11px;
  height: 334px;
  border-radius: 6px;
  background: #9f9f9f;
}

/* taskbar */
.taskbar {
  display: grid;
  grid-template-columns: 1fr auto 1fr;
  align-items: center;
  height: 60px;
  border-top: 1px solid #4a4650;
  background: linear-gradient(to right, #1c252a, #17242b 24%, #17204a 34%, #1e1e55 40%, #301b45 46%, #381b42 60%, #3b1541 74%, #3a1534 88%, #2f1a30);
  color: #fff;
}

.weather {
  display: flex;
  align-items: center;
  gap: 5px;
  padding: 0 0 2px 27px;
}

.weather-text, .clock {
  display: flex;
  flex-direction: column;
  line-height: 20px;
}

.weather-text { color: #c9cbcc; }
.temp { color: #fff; }
.badge-text { font-size: 14px; fill: #111; }

.task-center { display: flex; align-items: center; }

.task {
  position: relative;
  width: 55px;
  height: 50px;
}

.task.open::after {
  content: "";
  position: absolute;
  bottom: 0;
  left: 24px;
  width: 8px;
  height: 4px;
  border-radius: 2px;
  background: #a08fa8;
}

.task.current::before {
  content: "";
  position: absolute;
  inset: 0 3px;
  border: 1px solid rgba(255, 255, 255, .08);
  border-radius: 5px;
  background: rgba(255, 255, 255, .07);
}

.task.current svg { position: relative; margin-bottom: 6px; }
.task.current::after { left: 18px; width: 20px; background: #dc9fe6; }

.search {
  display: flex;
  align-items: center;
  gap: 12px;
  width: 275px;
  height: 40px;
  margin: 0 3px 0 4px;
  padding: 0 11px 0 14px;
  border: 1px solid rgba(255, 255, 255, .16);
  border-radius: 20px;
  background: rgba(255, 255, 255, .15);
  color: #eee;
}

.search input {
  flex: 1;
  min-width: 0;
  padding: 0;
  border: 0;
  outline: 0;
  background: none;
  font: inherit;
  font-size: 16px;
  color: inherit;
}

.search input::placeholder { color: #ccd0d6; }

.tray {
  display: flex;
  align-items: center;
  justify-content: flex-end;
  padding: 0 26px 2px 0;
}

.tray-icons { display: flex; gap: 10px; margin: 0 21px 0 23px; }
.clock { align-items: flex-end; margin-right: 10px; }
```
